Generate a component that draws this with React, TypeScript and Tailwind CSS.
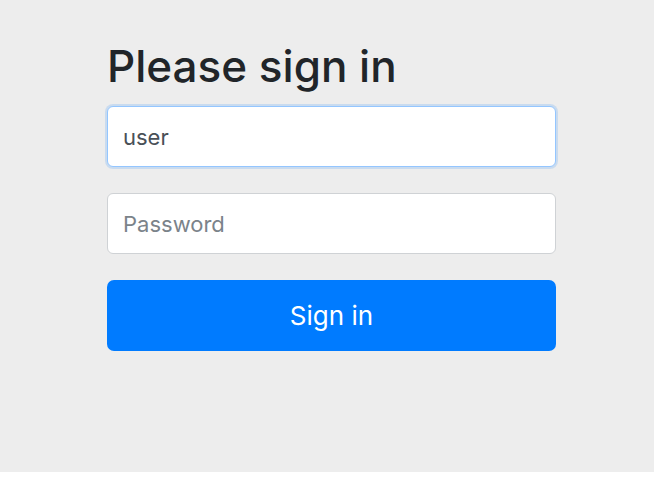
export default function App() {
  return (
    <div className="w-[654px] h-[480px] bg-white font-['Inter',sans-serif]">
      <div className="h-[472px] bg-[#ededed] pl-[107px] pt-[40px]">
        <form className="w-[449px] flex flex-col" onSubmit={(e) => e.preventDefault()}>
          <h2 className="h-[52px] leading-[52px] text-[44px] font-medium text-[#212529]">
            Please sign in
          </h2>

          <input
            type="text"
            defaultValue="user"
            className="mt-[14px] h-[61px] w-full rounded-[6px] border border-[#94c6ff] bg-white pl-[15px] text-[22px] text-[#495057] outline-none shadow-[0_0_0_2px_rgba(0,123,255,0.15)]"
          />

          <input
            type="password"
            placeholder="Password"
            className="mt-[26px] h-[61px] w-full rounded-[6px] border border-[#cfd2d5] bg-white pl-[15px] text-[22px] text-[#495057] placeholder:text-[#7b838a] outline-none"
          />

          <button
            type="submit"
            className="mt-[26px] h-[71px] w-full rounded-[7px] bg-[#007bff] text-[26px] text-white"
          >
            Sign in
          </button>
        </form>
      </div>
    </div>
  );
}
